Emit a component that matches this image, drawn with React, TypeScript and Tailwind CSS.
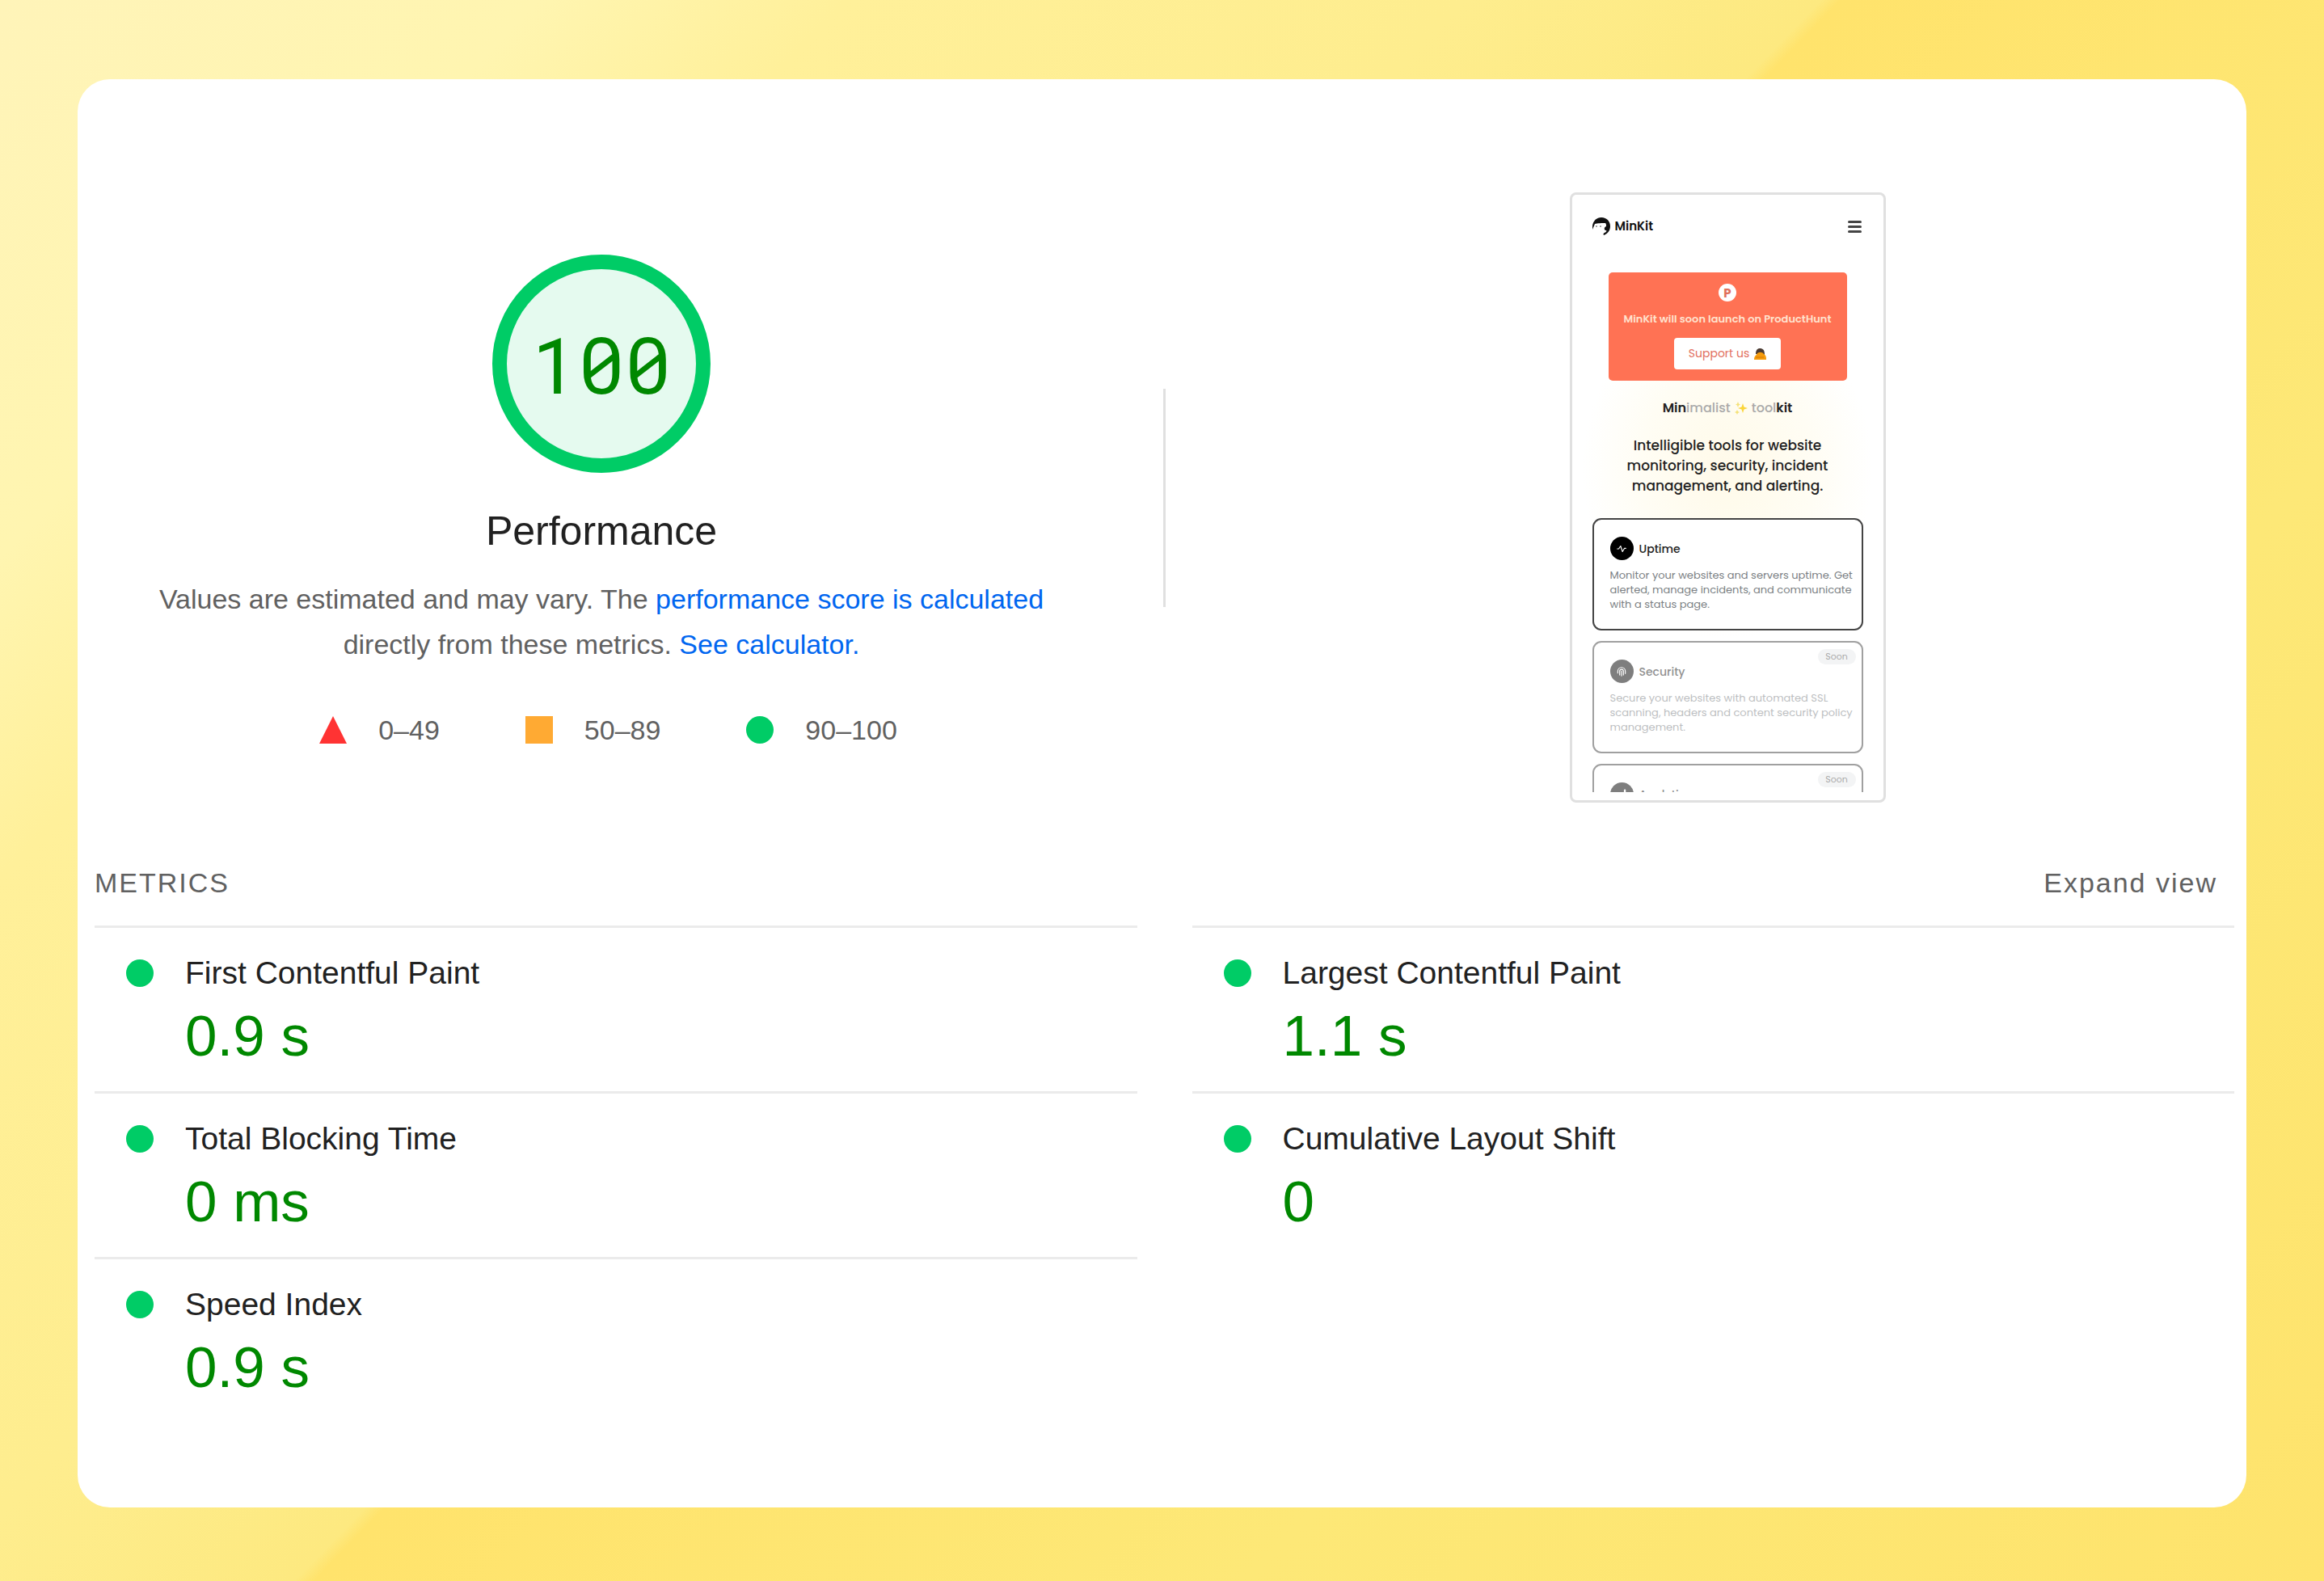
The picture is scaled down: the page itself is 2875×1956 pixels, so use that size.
import React from "react";

type Metric = { name: string; value: string };

const leftMetrics: Metric[] = [
  { name: "First Contentful Paint", value: "0.9 s" },
  { name: "Total Blocking Time", value: "0 ms" },
  { name: "Speed Index", value: "0.9 s" },
];

const rightMetrics: Metric[] = [
  { name: "Largest Contentful Paint", value: "1.1 s" },
  { name: "Cumulative Layout Shift", value: "0" },
];

function MetricList({ items }: { items: Metric[] }) {
  return (
    <dl>
      {items.map((m) => (
        <div
          key={m.name}
          className="grid h-[205px] grid-cols-[34px_1fr] content-start items-center gap-x-[39px] border-t-[3px] border-[#ebebeb] pl-[39px] pt-[30px]"
        >
          <span className="size-[34px] rounded-full bg-[#00cc66]" />
          <dt className="text-[39px] leading-[52px] text-[#212121]">{m.name}</dt>
          <dd className="col-start-2 text-[71px] leading-[104px] text-[#008800]">{m.value}</dd>
        </div>
      ))}
    </dl>
  );
}

function FaceLogo() {
  return (
    <svg viewBox="0 0 22 22" className="size-[22px]" aria-hidden="true">
      <path
        d="M0 15 C-1 6 4 0 11 0 C18 0 22 5 22 11 C22 16 19 20 14 22 C13 21 14 19 15 19 C17 18 18 17 17 16 C14 16 14 12 17 11 C17 9 17 8 16 7 C12 7 6 7 3 8 C2 10 1 13 0 15 Z"
        fill="#111"
      />
      <path d="M4 11h2M9 11h2" stroke="#555" strokeWidth="1" />
    </svg>
  );
}

type Tool = { name: string; lines: string[]; soon: boolean; icon: React.ReactNode };

const tools: Tool[] = [
  {
    name: "Uptime",
    lines: [
      "Monitor your websites and servers uptime. Get",
      "alerted, manage incidents, and communicate",
      "with a status page.",
    ],
    soon: false,
    icon: <path d="M3 12h3l4-6 4 12 4-7h3" />,
  },
  {
    name: "Security",
    lines: [
      "Secure your websites with automated SSL",
      "scanning, headers and content security policy",
      "management.",
    ],
    soon: true,
    icon: (
      <path d="M4 15v-4a8 8 0 0 1 16 0v5M8 19v-8a4 4 0 0 1 8 0v8M12 11v10" />
    ),
  },
  {
    name: "Analytics",
    lines: [],
    soon: true,
    icon: <path d="M5 21v-6M12 21V9M19 21V3" strokeWidth="4" />,
  },
];

function ToolCard({ tool }: { tool: Tool }) {
  return (
    <article
      className={
        "relative h-[139px] shrink-0 rounded-[11px] border-2 border-[#444] bg-white px-5 pt-[21px] " +
        (tool.soon ? "opacity-50" : "")
      }
    >
      {tool.soon && (
        <span className="absolute right-[7px] top-2 flex h-[19px] w-[47px] items-center justify-center rounded-full bg-[#e8eaec] text-[11px] text-[#555]">
          Soon
        </span>
      )}
      <div className="flex items-center gap-[7px]">
        <span className="flex size-[29px] items-center justify-center rounded-full bg-black">
          <svg
            viewBox="0 0 24 24"
            className="size-[14px]"
            fill="none"
            stroke="#fff"
            strokeWidth="2"
            strokeLinecap="round"
            strokeLinejoin="round"
            aria-hidden="true"
          >
            {tool.icon}
          </svg>
        </span>
        <h3 className="text-[14px] font-medium leading-[18px] text-[#222]">{tool.name}</h3>
      </div>
      <p className="mt-[10px] whitespace-nowrap text-[13px] leading-[18px] text-[#7b7f84]">
        {tool.lines.map((line) => (
          <span key={line} className="block">
            {line}
          </span>
        ))}
      </p>
    </article>
  );
}

function PhonePreview() {
  return (
    <div className="h-[755px] w-[391px] rounded-lg border-[3px] border-[#e0e0e0] p-[10px] font-['Poppins','Inter',sans-serif]">
      <div className="flex h-full flex-col overflow-hidden bg-[radial-gradient(ellipse_180px_210px_at_182px_330px,#fffae9,#fffdf4_60%,#ffffff)] px-[15px]">
        <header className="mt-[17px] flex h-[24px] shrink-0 items-center gap-[6px]">
          <FaceLogo />
          <span className="text-[15px] font-semibold leading-5 text-[#111]">MinKit</span>
          <button type="button" aria-label="Menu" className="ml-auto mr-[2px] flex w-[17px] flex-col gap-[3px]">
            <span className="h-[3px] rounded-sm bg-[#444]" />
            <span className="h-[3px] rounded-sm bg-[#444]" />
            <span className="h-[3px] rounded-sm bg-[#444]" />
          </button>
        </header>
        <section className="mx-5 mt-[45px] flex h-[134px] shrink-0 flex-col items-center rounded-[5px] bg-[#ff7254] pt-[14px]">
          <span className="flex size-[22px] items-center justify-center rounded-full bg-white text-[15px] font-bold leading-none text-[#e0705a]">
            P
          </span>
          <p className="mt-3 whitespace-nowrap text-[13px] font-semibold leading-[20px] text-[#ffe3cf]">
            MinKit will soon launch on ProductHunt
          </p>
          <button
            type="button"
            className="mt-[13px] flex h-[39px] w-[132px] items-center justify-center gap-[6px] rounded-[4px] bg-white text-[14px] text-[#e2705f]"
          >
            Support us
            <svg viewBox="0 0 15 15" className="size-[15px]" aria-hidden="true">
              <path d="M2 8 C2 2 5 1 7 1 C11 1 13 3 13 9 Z" fill="#4a3a32" />
              <path d="M0 15 C0 10 3 9 3 9 C4 5 10 5 12 8 C15 10 15 12 15 15 Z" fill="#f59b0b" />
              <path d="M2 12h10" stroke="#d97b06" strokeWidth="1" />
            </svg>
          </button>
        </section>
        <h1 className="mt-[22px] flex shrink-0 items-center justify-center text-[16px] font-semibold leading-6 text-[#222]">
          Min<span className="font-medium text-[#aaa]">imalist</span>
          <svg viewBox="0 0 16 16" className="mx-[5px] size-[16px]" aria-hidden="true">
            <path d="M10 2 L11.500 6.500 L16 8 L11.500 9.500 L10 14 L8.500 9.500 L4 8 L8.500 6.500 Z" fill="#fbd53a" />
            <path d="M4 0 L5 2.500 L7 3.500 L5 4.500 L4 7 L3 4.500 L1 3.500 L3 2.500 Z M3 10 L4 12 L6 13 L4 14 L3 16 L2 14 L0 13 L2 12 Z" fill="#f5e27a" />
          </svg>
          <span className="font-medium text-[#aaa]">tool</span>kit
        </h1>
        <p className="mt-[22px] shrink-0 whitespace-nowrap text-center text-[17px] font-medium leading-[25px] text-[#222]">
          Intelligible tools for website
          <br />
          monitoring, security, incident
          <br />
          management, and alerting.
        </p>
        <div className="mt-[27px] flex flex-col gap-[13px]">
          {tools.map((t) => (
            <ToolCard key={t.name} tool={t} />
          ))}
        </div>
      </div>
    </div>
  );
}

export default function App() {
  return (
    <div className="min-h-screen bg-[linear-gradient(134deg,#fff4b9_0%,#fff5b0_14%,#fff09a_22%,#feed8e_38%,#fde980_47.3%,#ffe36c_47.8%,#fde877_72%,#fee36c_100%)] px-24 pb-[91px] pt-[98px] font-['Liberation_Sans',Arial,sans-serif]">
      <main className="min-h-[1767px] rounded-[40px] bg-white pl-[21px] pr-[15px] pt-[140px]">
        <section className="grid grid-cols-[1fr_3px_1fr] items-center gap-x-[68px]">
          <div className="flex flex-col items-center pt-[14px]">
            <div className="flex size-[270px] items-center justify-center rounded-full border-[18px] border-[#00cc66] bg-[#e5faef] font-['Roboto_Mono','Inter',monospace] text-[96px] leading-none text-[#008800]">
              100
            </div>
            <h2 className="mt-[40px] text-[50px] leading-[64px] text-[#212121]">Performance</h2>
            <p className="mt-[24px] text-center text-[34px] leading-[56px] text-[#616161]">
              Values are estimated and may vary. The{" "}
              <a href="#scoring" className="text-[#0066f0]">
                performance score is calculated
              </a>
              <br />
              directly from these metrics.{" "}
              <a href="#calculator" className="text-[#0066f0]">
                See calculator.
              </a>
            </p>
            <ul className="mt-[50px] flex gap-[106px] pl-[17px] text-[34px] leading-[56px] text-[#616161]">
              <li className="flex items-center gap-[39px]">
                <svg viewBox="0 0 34 34" className="size-[34px]" aria-hidden="true">
                  <path d="M17 0 L34 34 L0 34 Z" fill="#ff3333" />
                </svg>
                0–49
              </li>
              <li className="flex items-center gap-[39px]">
                <span className="size-[34px] bg-[#ffaa33]" />
                50–89
              </li>
              <li className="flex items-center gap-[39px]">
                <span className="size-[34px] rounded-full bg-[#00cc66]" />
                90–100
              </li>
            </ul>
          </div>
          <div className="h-[270px] bg-[#e0e0e0]" />
          <div className="flex justify-center">
            <PhonePreview />
          </div>
        </section>
        <section className="mt-[71px]">
          <div className="flex items-center justify-between pr-[21px] text-[34px] leading-[56px] text-[#616161]">
            <h2 className="tracking-[2px]">METRICS</h2>
            <button type="button" className="tracking-[2px]">
              Expand view
            </button>
          </div>
          <div className="mt-[25px] grid grid-cols-2 gap-x-[68px]">
            <MetricList items={leftMetrics} />
            <MetricList items={rightMetrics} />
          </div>
        </section>
      </main>
    </div>
  );
}
